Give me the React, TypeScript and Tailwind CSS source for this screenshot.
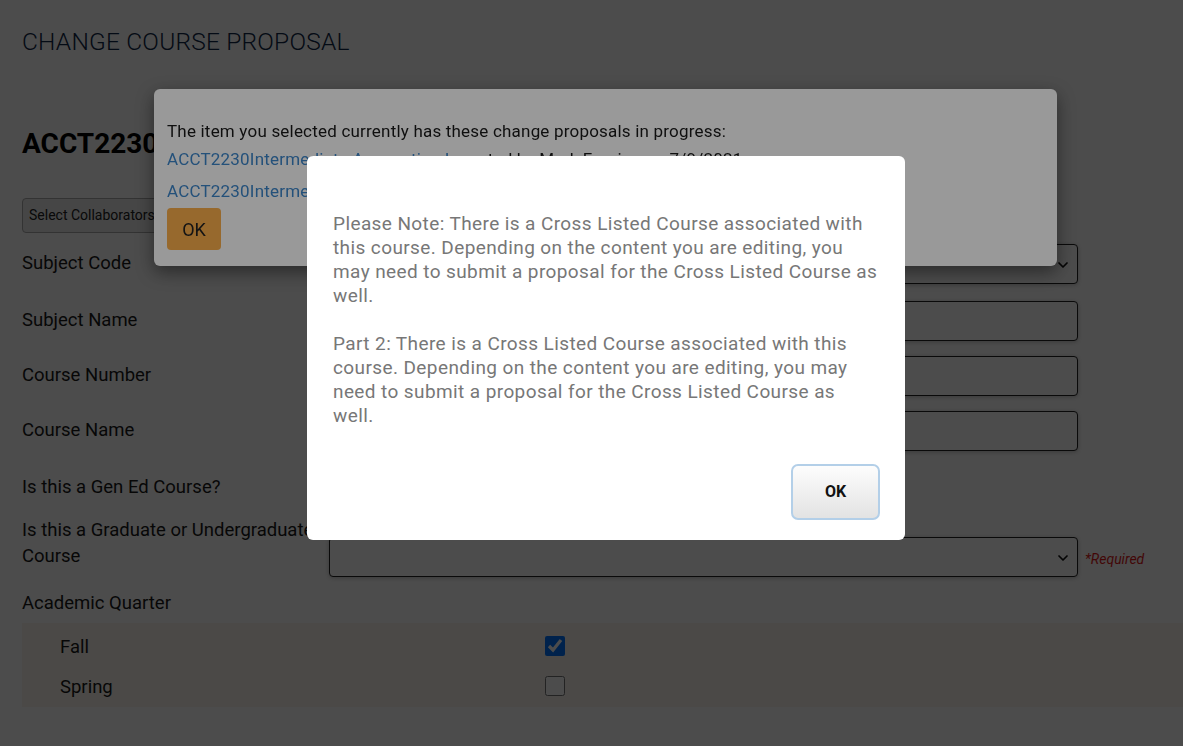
import { ChevronDown } from 'lucide-react'

const FONT = { fontFamily: 'Roboto, "Liberation Sans", sans-serif' }

function SelectBox({ className = '' }: { className?: string }) {
  return (
    <div
      className={`relative h-10 w-[749px] rounded-[4px] border border-[#222] bg-white shadow-[0_1px_4px_rgba(0,0,0,0.25)] ${className}`}
    >
      <ChevronDown size={16} strokeWidth={2.6} className="absolute right-[6px] top-[12px] text-[#111]" />
    </div>
  )
}

function TextBox() {
  return <div className="h-10 w-[749px] rounded-[4px] border border-[#222] bg-white shadow-[0_1px_4px_rgba(0,0,0,0.25)]" />
}

function FormRow({ label, children }: { label: string; children?: React.ReactNode }) {
  return (
    <div className="flex items-center">
      <div className="w-[307px] text-[18.5px] text-[#1a1a1a]">{label}</div>
      {children}
    </div>
  )
}

export default function App() {
  return (
    <div style={FONT} className="relative min-h-[746px] overflow-hidden bg-white">
      {/* page underneath */}
      <div className="pl-[22px]">
        <h1 className="pt-[26px] text-[24.5px] font-light leading-8 tracking-[0.2px] text-[#0f2747]">
          CHANGE COURSE PROPOSAL
        </h1>
        <h2 className="mt-[68px] text-[28px] font-bold leading-9 text-black">ACCT2230 Intermediate Accounting I</h2>
        <div className="mt-[36px] flex h-[35px] w-[190px] items-center rounded-[4px] border border-[#aaa] bg-[#ececec] px-[6px] text-[14px] text-[#222]">
          Select Collaborators...
        </div>

        <div className="mt-[11px] flex flex-col">
          <FormRow label="Subject Code">
            <SelectBox />
          </FormRow>
          <div className="h-[17px]" />
          <FormRow label="Subject Name">
            <TextBox />
          </FormRow>
          <div className="h-[15px]" />
          <FormRow label="Course Number">
            <TextBox />
          </FormRow>
          <div className="h-[15px]" />
          <FormRow label="Course Name">
            <TextBox />
          </FormRow>
          <div className="mt-[23px] text-[18.5px] leading-[26px] text-[#1a1a1a]">Is this a Gen Ed Course?</div>
          <div className="mt-[17px] flex items-start">
            <div className="w-[307px] text-[18.5px] leading-[26px] text-[#1a1a1a]">
              Is this a Graduate or Undergraduate Course
            </div>
            <SelectBox className="mt-[20px]" />
            <span className="ml-[7px] mt-[32px] text-[14px] italic text-[#e01b1b]">*Required</span>
          </div>
          <div className="mt-[13px] text-[18.5px] leading-[26px] text-[#1a1a1a]">Academic Quarter</div>
          <div className="mt-[7px] flex flex-col bg-[#faf7ee] pb-[1px] pl-[38px] pt-[3px]">
            <label className="flex h-10 items-center text-[18.5px] text-[#1a1a1a]">
              <span className="mt-[3px] w-[485px]">Fall</span>
              <input type="checkbox" defaultChecked className="h-5 w-5 accent-[#0075ff]" />
            </label>
            <label className="flex h-10 items-center text-[18.5px] text-[#1a1a1a]">
              <span className="mt-[3px] w-[485px]">Spring</span>
              <input type="checkbox" className="h-5 w-5 accent-[#0075ff]" />
            </label>
          </div>
        </div>
      </div>

      {/* first dialog */}
      <div className="fixed inset-0 bg-black/50" />
      <div className="absolute left-[154px] top-[89px] h-[177px] w-[903px] rounded-[6px] bg-white px-[13px] pt-[30px] shadow-[0_6px_18px_rgba(0,0,0,0.45)]">
        <p className="text-[17px] leading-6 tracking-[0.2px] text-[#1a1a1a]">
          The item you selected currently has these change proposals in progress:
        </p>
        <p className="mt-[4px] text-[17px] leading-6 tracking-[0.2px] text-[#1a1a1a]">
          <span className="text-[#3d87cc]">ACCT2230Intermediate Accounting I</span> created by Mark Froning on 7/9/2021
        </p>
        <p className="mt-[8px] text-[17px] leading-6 tracking-[0.2px] text-[#1a1a1a]">
          <span className="text-[#3d87cc]">ACCT2230Intermediate Accounting I</span> created by Mark Froning on 7/9/2021
        </p>
        <button className="mt-[5px] h-[42px] w-[54px] rounded-[4px] bg-[#fcaf4b] text-[18px] text-[#222]">OK</button>
      </div>

      {/* second dialog */}
      <div className="fixed inset-0 bg-black/40" />
      <div className="absolute left-[307px] top-[156px] flex h-[384px] w-[598px] flex-col rounded-[6px] bg-white pl-[26px] pr-[26px] pt-[56px]">
        <div className="text-[19px] leading-6 tracking-[0.4px] text-[#777]">
          <p>
            Please Note: There is a Cross Listed Course associated with this course. Depending on the content you are
            editing, you may need to submit a proposal for the Cross Listed Course as well.
          </p>
          <p className="mt-6">
            Part 2: There is a Cross Listed Course associated with this course. Depending on the content you are
            editing, you may need to submit a proposal for the Cross Listed Course as well.
          </p>
        </div>
        <div className="mt-auto flex justify-end pb-[20px]">
          <button className="-mr-[1px] h-[56px] w-[89px] rounded-[7px] border-2 border-[#b3cfe8] bg-gradient-to-b from-[#fdfdfd] to-[#e3e3e3] text-[16px] font-bold text-[#111]">
            OK
          </button>
        </div>
      </div>
    </div>
  )
}
